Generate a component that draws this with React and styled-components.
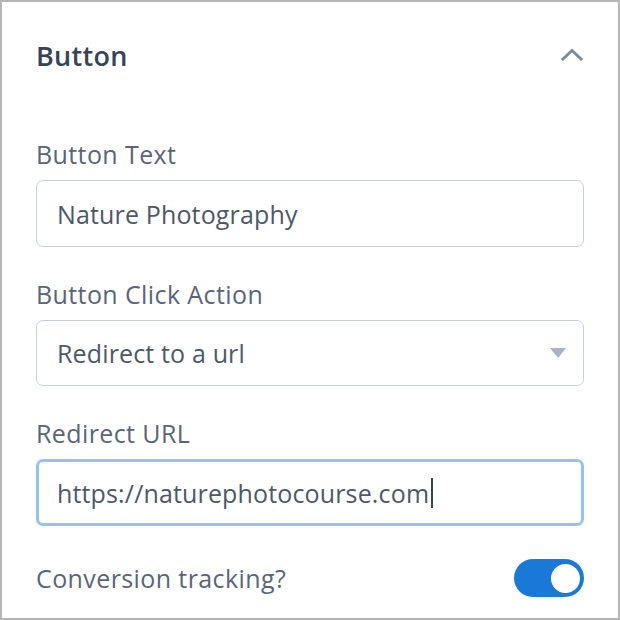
import styled, { createGlobalStyle } from 'styled-components'

const GlobalStyle = createGlobalStyle`
	html, body {
		margin: 0;
		padding: 0;
		background: #fff;
	}
	* {
		box-sizing: border-box;
	}
`

const Panel = styled.div`
	width: 620px;
	height: 620px;
	border: 2px solid #b5b5b5;
	padding: 0 34px;
	background: #fff;
	font-family: 'Open Sans', 'Liberation Sans', sans-serif;
	color: #586274;
`

const Header = styled.div`
	display: flex;
	align-items: center;
	justify-content: space-between;
	height: 106px;
	margin-bottom: 31px;
`

const Title = styled.h2`
	margin: 0;
	font-size: 27px;
	font-weight: 600;
	color: #374357;
	letter-spacing: 0.3px;
`

const Chevron = styled.svg`
	width: 24px;
	height: 16px;
`

const Field = styled.div`
	display: flex;
	flex-direction: column;
	margin-bottom: ${(p) => p.$gap || 0}px;
`

const Label = styled.label`
	font-size: 25px;
	line-height: 30px;
	letter-spacing: 0.4px;
	color: #5a6579;
	margin-bottom: 11px;
`

const Box = styled.div`
	position: relative;
	display: flex;
	align-items: center;
	height: ${(p) => p.$h || 67}px;
	padding: 0 20px;
	border: ${(p) => (p.$focus ? '3px solid #96c1f5' : '1px solid #c6cfe0')};
	border-radius: 7px;
	font-size: 25px;
	letter-spacing: 0.15px;
	color: #4e5868;
	padding-left: ${(p) => (p.$focus ? 18 : 20)}px;
`

const Caret = styled.span`
	display: inline-block;
	width: 2px;
	height: 30px;
	background: #3b4452;
	margin-left: 2px;
`

const Arrow = styled.span`
	position: absolute;
	right: 17px;
	top: 50%;
	margin-top: -5px;
	width: 0;
	height: 0;
	border-left: 8px solid transparent;
	border-right: 8px solid transparent;
	border-top: 10px solid #a8b3c8;
`

const ToggleRow = styled.div`
	display: flex;
	align-items: center;
	justify-content: space-between;
	font-size: 25px;
	letter-spacing: 0.4px;
	color: #5a6579;
	margin-top: 33px;
`

const Switch = styled.div`
	width: 70px;
	height: 38px;
	border-radius: 19px;
	background: ${(p) => (p.$on ? '#1a79d8' : '#c6cfe0')};
	display: flex;
	align-items: center;
	justify-content: ${(p) => (p.$on ? 'flex-end' : 'flex-start')};
	padding: 0 4px;
`

const Knob = styled.div`
	width: 29px;
	height: 29px;
	border-radius: 50%;
	background: #fff;
`

export default function App() {
	return (
		<>
			<GlobalStyle />
			<Panel>
				<Header>
					<Title>Button</Title>
					<Chevron viewBox='0 0 24 16'>
						<path d='M3 12 L12 3.5 L21 12' fill='none' stroke='#7d8ba1' strokeWidth='3' strokeLinecap='square' />
					</Chevron>
				</Header>
				<Field $gap={32}>
					<Label>Button Text</Label>
					<Box>Nature Photography</Box>
				</Field>
				<Field $gap={32}>
					<Label>Button Click Action</Label>
					<Box $h={66}>
						Redirect to a url
						<Arrow />
					</Box>
				</Field>
				<Field>
					<Label>Redirect URL</Label>
					<Box $focus>
						https://naturephotocourse.com
						<Caret />
					</Box>
				</Field>
				<ToggleRow>
					<span>Conversion tracking?</span>
					<Switch $on>
						<Knob />
					</Switch>
				</ToggleRow>
			</Panel>
		</>
	)
}
